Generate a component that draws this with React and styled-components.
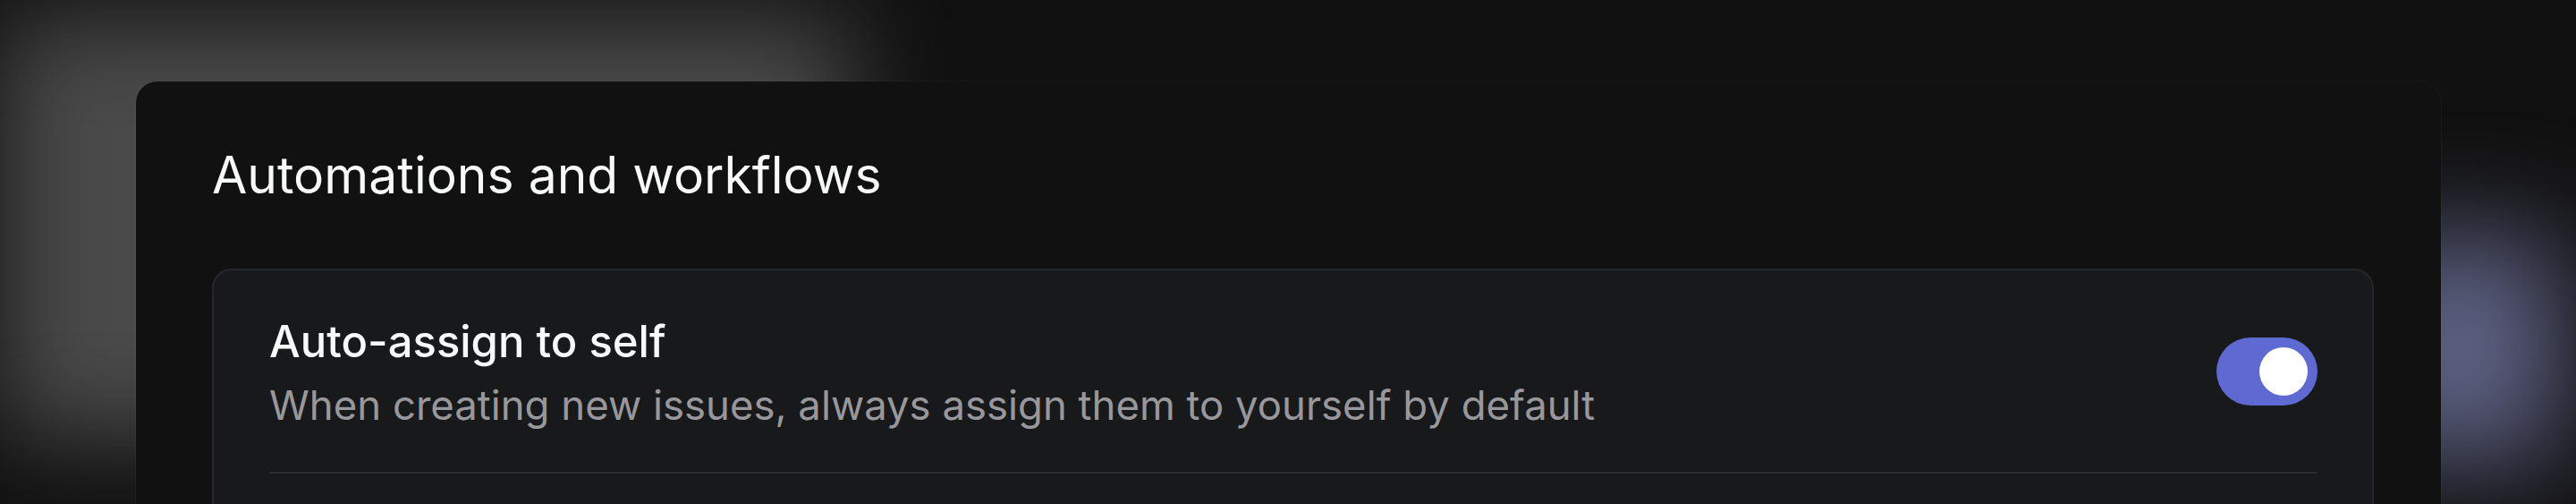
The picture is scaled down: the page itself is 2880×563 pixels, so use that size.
import React from 'react';
import styled, { createGlobalStyle } from 'styled-components';

const GlobalStyle = createGlobalStyle`
  html, body {
    margin: 0;
    padding: 0;
    background: #111111;
  }
  body {
    font-family: Inter, "Noto Sans", sans-serif;
    -webkit-font-smoothing: antialiased;
  }
`;

// the grey and violet glows behind the settings panel
const Page = styled.div`
  position: relative;
  width: 2880px;
  height: 563px;
  overflow: hidden;
  background: #111111;
  padding: 91px 151px 0 152px;
  box-sizing: border-box;

  &::before,
  &::after {
    content: '';
    position: absolute;
    z-index: 0;
  }
  &::before {
    left: 0;
    top: 20px;
    width: 950px;
    height: 470px;
    background: #4a4a4a;
    filter: blur(55px);
  }
  &::after {
    left: 2640px;
    top: 265px;
    width: 220px;
    height: 250px;
    background: #5f6284;
    filter: blur(60px);
  }
`;

const Panel = styled.section`
  position: relative;
  z-index: 1;
  height: 600px;
  background: #111111;
  border-radius: 24px;
  padding: 71px 75px 0 85px;
  box-sizing: border-box;
  box-shadow: 0 0 0 1px rgba(255, 255, 255, 0.03);
`;

const Heading = styled.h2`
  margin: 0 0 70px;
  font-size: 57px;
  line-height: 68px;
  font-weight: 400;
  color: #f7f8f8;
`;

const Card = styled.div`
  min-height: 400px;
  background: #18191b;
  border: 2px solid #26272c;
  border-radius: 22px;
  padding: 0 61px 0 62px;
`;

const Row = styled.div`
  display: flex;
  align-items: center;
  justify-content: space-between;
  min-height: 225px;
  border-bottom: 2px solid #2a2b30;
`;

const Text = styled.div`
  display: flex;
  flex-direction: column;
  gap: 14px;
  padding-top: 4px;
`;

const Title = styled.div`
  font-size: 49px;
  line-height: 58px;
  font-weight: 500;
  color: #f7f8f8;
`;

const Description = styled.div`
  font-size: 45.5px;
  line-height: 56px;
  font-weight: 400;
  color: #98989c;
`;

const Toggle = styled.button`
  display: flex;
  align-items: center;
  justify-content: ${p => (p.$on ? 'flex-end' : 'flex-start')};
  width: 113px;
  height: 76px;
  padding: 0 11px;
  border: none;
  border-radius: 38px;
  background: ${p => (p.$on ? '#5e6ad2' : '#3a3b40')};
  cursor: pointer;
  box-sizing: border-box;
`;

const Knob = styled.span`
  width: 54px;
  height: 54px;
  border-radius: 50%;
  background: #ffffff;
`;

const SettingRow = ({ title, description, on }) => (
  <Row>
    <Text>
      <Title>{title}</Title>
      <Description>{description}</Description>
    </Text>
    <Toggle $on={on} aria-pressed={on}>
      <Knob />
    </Toggle>
  </Row>
);

const App = () => {
  return (
    <Page>
      <GlobalStyle />
      <Panel>
        <Heading>Automations and workflows</Heading>
        <Card>
          <SettingRow
            title="Auto-assign to self"
            description="When creating new issues, always assign them to yourself by default"
            on
          />
        </Card>
      </Panel>
    </Page>
  );
};

export default App;
